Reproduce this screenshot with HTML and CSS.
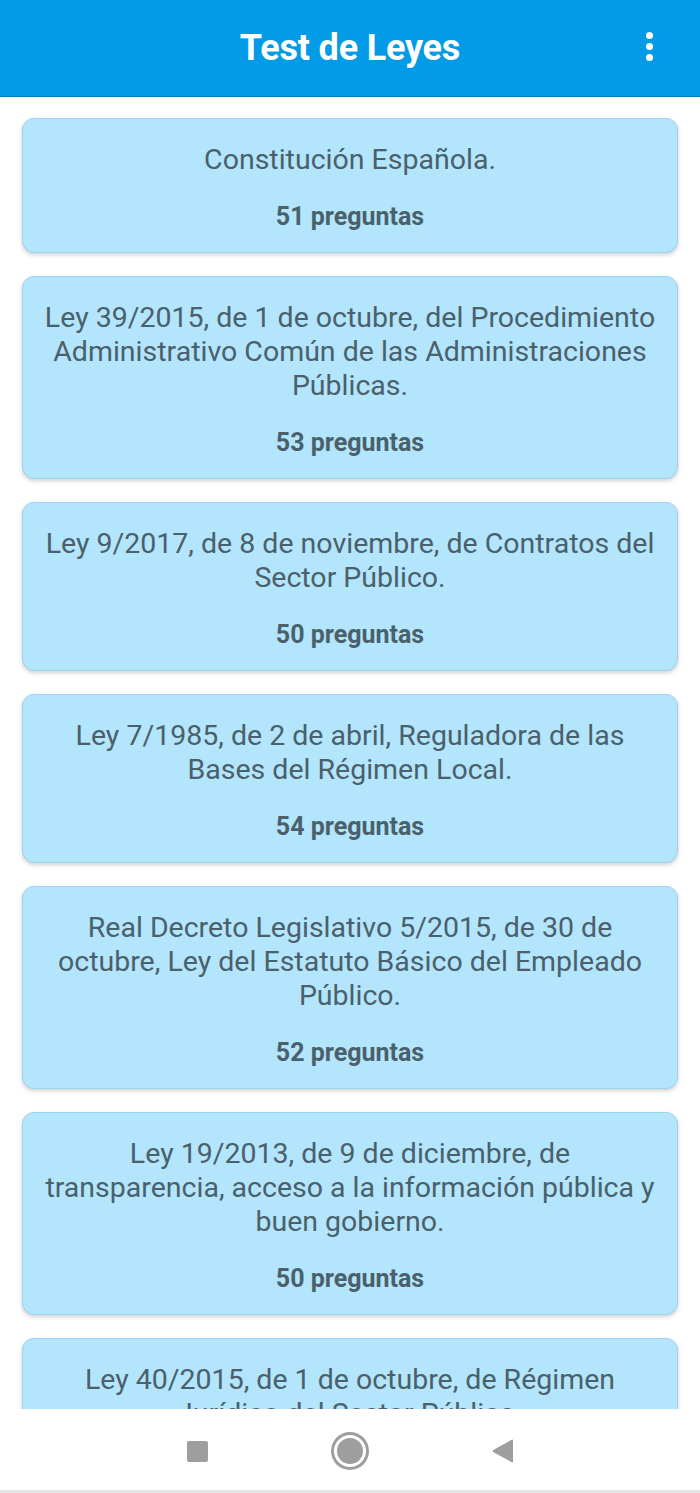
FILE: index.html
```html
<!DOCTYPE html>
<html lang="es">
<head>
    <meta charset="UTF-8">
    <meta name="viewport" content="width=device-width, initial-scale=1.0">
    <title>Test de Leyes</title>
    <link rel="stylesheet" href="styles.css">
</head>
<body>
    <div class="app">
        <div class="toolbar">
            <div class="toolbar-title">Test de Leyes</div>
            <div class="menu-button">
                <span class="dot"></span>
                <span class="dot"></span>
                <span class="dot"></span>
            </div>
        </div>

        <div class="law-list">
            <div class="law-card">
                <div class="law-name">Constitución Española.</div>
                <div class="law-count">51 preguntas</div>
            </div>
            <div class="law-card">
                <div class="law-name">Ley 39/2015, de 1 de octubre, del Procedimiento Administrativo Común de las Administraciones Públicas.</div>
                <div class="law-count">53 preguntas</div>
            </div>
            <div class="law-card">
                <div class="law-name">Ley 9/2017, de 8 de noviembre, de Contratos del Sector Público.</div>
                <div class="law-count">50 preguntas</div>
            </div>
            <div class="law-card">
                <div class="law-name">Ley 7/1985, de 2 de abril, Reguladora de las Bases del Régimen Local.</div>
                <div class="law-count">54 preguntas</div>
            </div>
            <div class="law-card">
                <div class="law-name">Real Decreto Legislativo 5/2015, de 30 de octubre, Ley del Estatuto Básico del Empleado Público.</div>
                <div class="law-count">52 preguntas</div>
            </div>
            <div class="law-card">
                <div class="law-name">Ley 19/2013, de 9 de diciembre, de transparencia, acceso a la información pública y buen gobierno.</div>
                <div class="law-count">50 preguntas</div>
            </div>
            <div class="law-card">
                <div class="law-name">Ley 40/2015, de 1 de octubre, de Régimen Jurídico del Sector Público.</div>
                <div class="law-count">51 preguntas</div>
            </div>
        </div>

        <div class="nav-bar">
            <span class="nav-square"></span>
            <span class="nav-home"></span>
            <svg class="nav-back" width="22" height="24" viewBox="0 0 22 24">
                <path d="M21 1.5 L21 22.5 Q21 24 19.6 23.2 L1.2 12.9 Q0 12 1.2 11.1 L19.6 0.8 Q21 0 21 1.5 Z" fill="#9e9e9e"/>
            </svg>
        </div>
    </div>
</body>
</html>
```

FILE: styles.css
```css
body {
    margin: 0;
    background-color: #fff;
    font-family: Roboto, "Liberation Sans", sans-serif;
    overflow: hidden;
}
.app {
    height: 1493px;
    display: flex;
    flex-direction: column;
}
.toolbar {
    height: 96px;
    flex-shrink: 0;
    background-color: #039be5;
    border-bottom: 1px solid #0b7dbd;
    display: flex;
    align-items: center;
    justify-content: center;
    position: relative;
    z-index: 1;
}
.toolbar-title {
    color: #fff;
    font-size: 36px;
    font-weight: 700;
    letter-spacing: -0.2px;
}
.menu-button {
    position: absolute;
    right: 47px;
    top: 32px;
    display: flex;
    flex-direction: column;
    gap: 4px;
}
.dot {
    width: 7px;
    height: 7px;
    border-radius: 50%;
    background-color: #fff;
}
.law-list {
    flex: 1;
    overflow: hidden;
    padding: 21px 22px 0;
    display: flex;
    flex-direction: column;
    gap: 23px;
}
.law-card {
    flex-shrink: 0;
    background-color: #b3e5fc;
    border: 1px solid #9dd3ec;
    border-radius: 12px;
    box-shadow: 0 2px 4px rgba(0, 0, 0, 0.18);
    padding: 24px 14px 20px;
    text-align: center;
    color: #4a606b;
}
.law-name {
    font-size: 28.5px;
    line-height: 34px;
}
.law-count {
    margin-top: 25px;
    font-size: 25px;
    line-height: 30px;
    font-weight: 700;
}
.nav-bar {
    height: 84px;
    flex-shrink: 0;
    background-color: #fff;
    border-bottom: 3px solid #e6e6e6;
    display: flex;
    align-items: center;
    justify-content: center;
    gap: 126px;
    padding-top: 3px;
    box-sizing: border-box;
}
.nav-square {
    width: 21px;
    height: 21px;
    border-radius: 2px;
    background-color: #9e9e9e;
}
.nav-home {
    width: 26px;
    height: 26px;
    border-radius: 50%;
    background-color: #9e9e9e;
    border: 3px solid #fff;
    box-shadow: 0 0 0 3px #9e9e9e;
}
.nav-back {
    display: block;
}
```
